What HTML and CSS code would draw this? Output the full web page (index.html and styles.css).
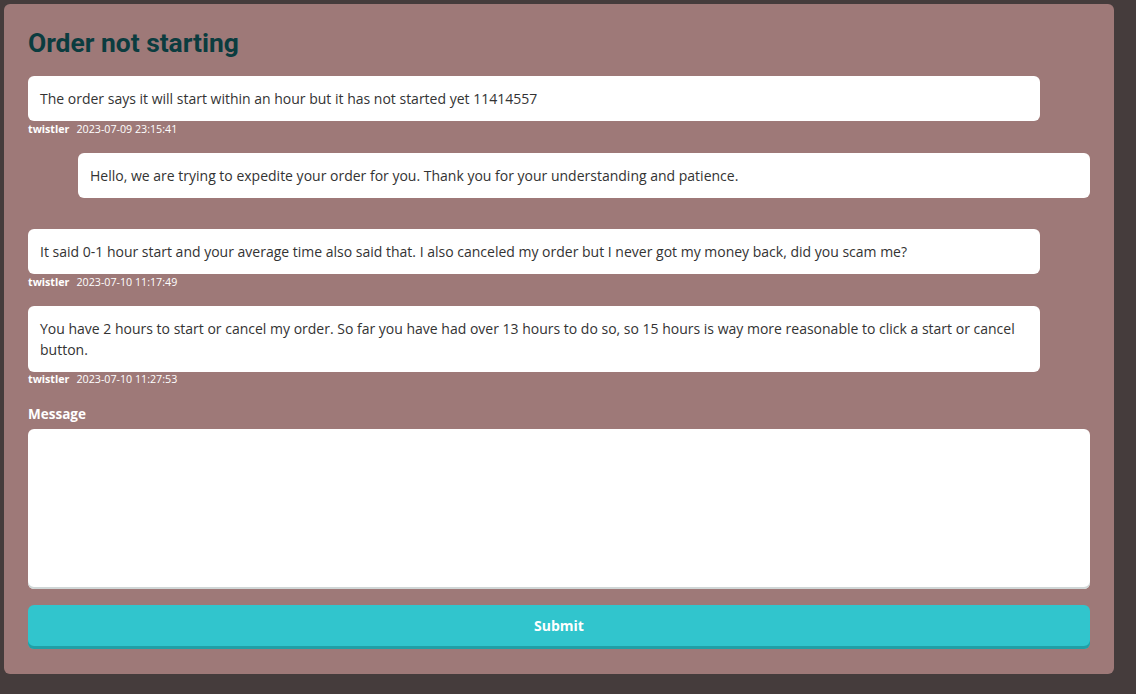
FILE: index.html
```html
<!DOCTYPE html>
<html>
<head>
<meta charset="utf-8">
<link rel="stylesheet" href="styles.css">
</head>
<body>
<div class="card">
  <h1 class="title">Order not starting</h1>
  <div class="thread">
    <div class="msg user">
      <div class="bubble">The order says it will start within an hour but it has not started yet 11414557</div>
      <div class="meta"><span class="name">twistler</span><span class="date">2023-07-09 23:15:41</span></div>
    </div>
    <div class="msg admin">
      <div class="bubble">Hello, we are trying to expedite your order for you. Thank you for your understanding and patience.</div>
      <div class="meta"></div>
    </div>
    <div class="msg user">
      <div class="bubble">It said 0-1 hour start and your average time also said that. I also canceled my order but I never got my money back, did you scam me?</div>
      <div class="meta"><span class="name">twistler</span><span class="date">2023-07-10 11:17:49</span></div>
    </div>
    <div class="msg user">
      <div class="bubble">You have 2 hours to start or cancel my order. So far you have had over 13 hours to do so, so 15 hours is way more reasonable to click a start or cancel button.</div>
      <div class="meta"><span class="name">twistler</span><span class="date">2023-07-10 11:27:53</span></div>
    </div>
  </div>
  <form class="reply">
    <label class="label" for="message">Message</label>
    <textarea id="message" class="input"></textarea>
    <button type="button" class="submit">Submit</button>
  </form>
</div>
</body>
</html>
```

FILE: styles.css
```css
html, body {
  margin: 0;
  padding: 0;
}
body {
  background: #453c3c;
  padding: 4px;
  height: 694px;
  box-sizing: border-box;
  font-family: "Open Sans", "Liberation Sans", sans-serif;
}
.card {
  width: 1110px;
  background: #9e7978;
  border-radius: 6px;
  padding: 24px 24px 25px;
  box-sizing: border-box;
}
.title {
  margin: 0 0 18px;
  font-family: Roboto, "Liberation Sans", sans-serif;
  font-weight: 700;
  font-size: 26.4px;
  line-height: 30px;
  color: #0b3c3f;
}
.thread {
  display: flex;
  flex-direction: column;
  gap: 16px;
}
.msg {
  display: flex;
  flex-direction: column;
}
.msg.user {
  margin-right: 50px;
}
.msg.admin {
  margin-left: 50px;
}
.bubble {
  background: #fff;
  border-radius: 6px;
  padding: 12px 12px;
  font-size: 14px;
  line-height: 21px;
  color: #333;
}
.meta {
  height: 15.5px;
  display: flex;
  gap: 7px;
  align-items: center;
  font-size: 10.7px;
  color: #fff;
  letter-spacing: 0;
}
.meta .name {
  font-weight: 700;
}
.reply {
  margin-top: 17px;
  display: flex;
  flex-direction: column;
}
.label {
  font-size: 13.5px;
  font-weight: 700;
  line-height: 21px;
  color: #fff;
  margin-bottom: 4px;
}
.input {
  height: 160px;
  border: none;
  border-radius: 6px;
  background: #fff;
  box-shadow: inset 0 -2px 0 #cfd6d6;
  resize: none;
  margin: 0;
  padding: 10px 12px;
  box-sizing: border-box;
  font-family: inherit;
}
.submit {
  margin-top: 16px;
  height: 44px;
  border: none;
  border-radius: 6px;
  background: #31c5cd;
  box-shadow: inset 0 -3px 0 #20a0a6;
  color: #fff;
  font-family: inherit;
  font-weight: 700;
  font-size: 14px;
  padding: 0 0 3px;
}
```
